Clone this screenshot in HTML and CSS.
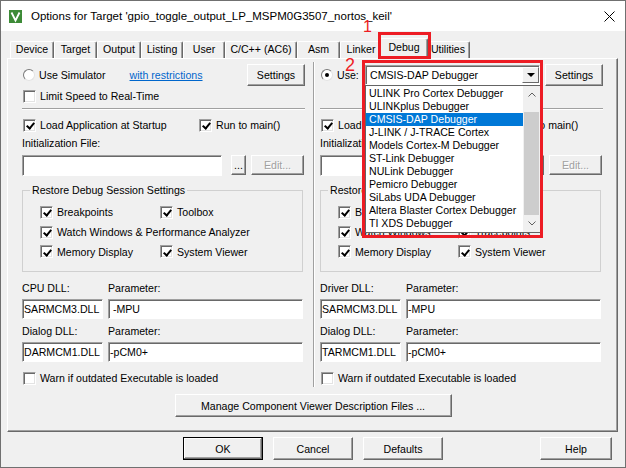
FILE: index.html
```html
<!doctype html>
<html lang="en">
<head>
    <meta charset="utf-8">
    <title>Options for Target</title>
    <link rel="stylesheet" href="styles.css">
</head>
<body>
<div class="window">
    <header class="titlebar">
        <svg class="app-icon" viewBox="0 0 13 13"><rect width="13" height="13" fill="#3d8b37"/><path d="M2.5 2.5 L6.5 10.5 L10.5 2.5" stroke="#fff" stroke-width="1.8" fill="none"/></svg>
        <span class="title">Options for Target 'gpio_toggle_output_LP_MSPM0G3507_nortos_keil'</span>
        <svg class="close" viewBox="0 0 11 11"><path d="M0.5 0.5L10.5 10.5M10.5 0.5L0.5 10.5" stroke="#000" stroke-width="1"/></svg>
    </header>

    <nav class="tabs">
        <span class="tab">Device</span>
        <span class="tab">Target</span>
        <span class="tab">Output</span>
        <span class="tab">Listing</span>
        <span class="tab">User</span>
        <span class="tab">C/C++ (AC6)</span>
        <span class="tab">Asm</span>
        <span class="tab">Linker</span>
        <span class="tab active">Debug</span>
        <span class="tab">Utilities</span>
    </nav>

    <section class="panel">
        <div class="columns">
            <!-- simulator side -->
            <div class="col">
                <div class="row top-row">
                    <label class="opt"><span class="radio"></span>Use Simulator</label>
                    <a href="#" class="sim-link">with restrictions</a>
                    <button class="btn settings">Settings</button>
                </div>
                <div class="row tall">
                    <label class="opt"><span class="cb"></span>Limit Speed to Real-Time</label>
                </div>
                <div class="sep"></div>
                <div class="pair">
                    <label class="opt"><span class="cb on"></span>Load Application at Startup</label>
                    <label class="opt"><span class="cb on"></span>Run to main()</label>
                </div>
                <div class="cap">Initialization File:</div>
                <div class="file-row">
                    <span class="field"></span>
                    <button class="btn browse">...</button>
                    <button class="btn edit" disabled>Edit...</button>
                </div>
                <fieldset class="group">
                    <legend>Restore Debug Session Settings</legend>
                    <div class="checks">
                        <label class="opt"><span class="cb on"></span>Breakpoints</label>
                        <label class="opt"><span class="cb on"></span>Toolbox</label>
                        <label class="opt wide"><span class="cb on"></span>Watch Windows &amp; Performance Analyzer</label>
                        <label class="opt"><span class="cb on"></span>Memory Display</label>
                        <label class="opt"><span class="cb on"></span>System Viewer</label>
                    </div>
                </fieldset>
                <div class="dlls">
                    <span>CPU DLL:</span><span>Parameter:</span>
                    <span class="field">SARMCM3.DLL</span><span class="field"> -MPU</span>
                    <span>Dialog DLL:</span><span>Parameter:</span>
                    <span class="field">DARMCM1.DLL</span><span class="field">-pCM0+</span>
                </div>
                <div class="row warn">
                    <label class="opt"><span class="cb"></span>Warn if outdated Executable is loaded</label>
                </div>
            </div>

            <div class="divider"></div>

            <!-- target driver side -->
            <div class="col">
                <div class="row top-row">
                    <label class="opt"><span class="radio on"></span>Use:</label>
                    <div class="combo">
                        <span>CMSIS-DAP Debugger</span>
                        <span class="combo-arrow"></span>
                        <div class="droplist">
                            <ul class="items">
                                <li>ULINK Pro Cortex Debugger</li>
                                <li>ULINKplus Debugger</li>
                                <li class="sel">CMSIS-DAP Debugger</li>
                                <li>J-LINK / J-TRACE Cortex</li>
                                <li>Models Cortex-M Debugger</li>
                                <li>ST-Link Debugger</li>
                                <li>NULink Debugger</li>
                                <li>Pemicro Debugger</li>
                                <li>SiLabs UDA Debugger</li>
                                <li>Altera Blaster Cortex Debugger</li>
                                <li>TI XDS Debugger</li>
                            </ul>
                            <div class="scrollbar">
                                <span class="sb-btn"><svg viewBox="0 0 8 5"><path d="M0.5 4.5L4 1L7.5 4.5" stroke="#606060" fill="none"/></svg></span>
                                <span class="sb-track"><span class="sb-thumb"></span></span>
                                <span class="sb-btn"><svg viewBox="0 0 8 5"><path d="M0.5 0.5L4 4L7.5 0.5" stroke="#606060" fill="none"/></svg></span>
                            </div>
                        </div>
                    </div>
                    <button class="btn settings">Settings</button>
                </div>
                <div class="row tall"></div>
                <div class="sep"></div>
                <div class="pair">
                    <label class="opt"><span class="cb on"></span>Load Application at Startup</label>
                    <label class="opt"><span class="cb on"></span>Run to main()</label>
                </div>
                <div class="cap">Initialization File:</div>
                <div class="file-row">
                    <span class="field"></span>
                    <button class="btn browse">...</button>
                    <button class="btn edit" disabled>Edit...</button>
                </div>
                <fieldset class="group">
                    <legend>Restore Debug Session Settings</legend>
                    <div class="checks">
                        <label class="opt"><span class="cb on"></span>Breakpoints</label>
                        <label class="opt"><span class="cb on"></span>Toolbox</label>
                        <label class="opt"><span class="cb on"></span>Watch Windows</label>
                        <label class="opt"><span class="cb on"></span>Tracepoints</label>
                        <label class="opt"><span class="cb on"></span>Memory Display</label>
                        <label class="opt"><span class="cb on"></span>System Viewer</label>
                    </div>
                </fieldset>
                <div class="dlls">
                    <span>Driver DLL:</span><span>Parameter:</span>
                    <span class="field">SARMCM3.DLL</span><span class="field">-MPU</span>
                    <span>Dialog DLL:</span><span>Parameter:</span>
                    <span class="field">TARMCM1.DLL</span><span class="field">-pCM0+</span>
                </div>
                <div class="row warn">
                    <label class="opt"><span class="cb"></span>Warn if outdated Executable is loaded</label>
                </div>
            </div>
        </div>
        <div class="manage-row">
            <button class="btn manage">Manage Component Viewer Description Files ...</button>
        </div>
    </section>

    <footer class="buttons">
        <button class="btn default">OK</button>
        <button class="btn">Cancel</button>
        <button class="btn">Defaults</button>
        <button class="btn help">Help</button>
    </footer>

    <!-- screenshot annotations -->
    <span class="mark mark-1">1</span>
    <div class="redbox box-tab"></div>
    <span class="mark mark-2">2</span>
    <div class="redbox box-drop"></div>
</div>
</body>
</html>
```

FILE: styles.css
```css
* { box-sizing: border-box; }
html, body { margin: 0; padding: 0; }
body {
    width: 626px;
    height: 468px;
    overflow: hidden;
    font-family: "Liberation Sans", Arial, sans-serif;
    font-size: 10.6px;
    color: #000;
    background: #fff;
}
.window {
    position: relative;
    width: 626px;
    height: 468px;
    background: #f0f0f0;
    border: 1px solid #707070;
}

/* title bar */
.titlebar {
    display: flex;
    align-items: center;
    height: 30px;
    padding-left: 8px;
    background: #fff;
}
.app-icon { width: 13px; height: 13px; margin-right: 9px; }
.title { flex: 1; font-size: 11.5px; }
.close { width: 11px; height: 11px; margin-right: 10px; }

/* tabs */
.tabs {
    display: flex;
    align-items: flex-end;
    height: 20px;
    margin: 7px 0 0 9px;
}
.tab {
    width: 42px;
    height: 17px;
    line-height: 15px;
    text-align: center;
    white-space: nowrap;
    border: 1px solid;
    border-bottom: 0;
    border-color: #fff #696969 transparent #fff;
    box-shadow: inset -1px 0 #a0a0a0;
    border-radius: 2px 2px 0 0;
}
.tab:nth-child(1),
.tab:nth-child(3),
.tab:nth-child(9),
.tab:nth-child(10) { width: 44px; }
.tab:nth-child(2),
.tab:nth-child(7) { width: 43px; }
.tab:nth-child(6) { width: 72px; }
.tab.active {
    position: relative;
    z-index: 1;
    width: 48px;
    height: 21px;
    margin: 0 -2px -1px;
    line-height: 16px;
    background: #f0f0f0;
}

/* tab page */
.panel {
    height: 374px;
    margin: 0 7px 0 6px;
    padding: 5px 13px 0 14px;
    border: 1px solid;
    border-color: #fff #696969 #696969 #fff;
    box-shadow: inset -1px -1px #a0a0a0;
}
.columns { display: flex; }
.col { width: 283px; display: flex; flex-direction: column; }
.divider {
    width: 2px;
    margin: -2px 5px 0 8px;
    border-left: 1px solid #a0a0a0;
    border-right: 1px solid #fff;
}

.row { display: flex; align-items: center; }
.top-row { height: 22px; }
.tall { height: 20px; }
.warn { height: 18px; margin-top: 7px; }
.opt { display: flex; align-items: center; gap: 4px; white-space: nowrap; }

.cb {
    position: relative;
    flex: none;
    width: 13px;
    height: 13px;
    margin-left: 1px;
    background: #fff;
    border: 1px solid;
    border-color: #a0a0a0 #fff #fff #a0a0a0;
    box-shadow: inset 1px 1px #696969, inset -1px -1px #e3e3e3;
}
.cb.on::after {
    content: "";
    position: absolute;
    left: 4px;
    top: 1.5px;
    width: 3px;
    height: 6px;
    border: solid #000;
    border-width: 0 2px 2px 0;
    transform: rotate(40deg);
}
.radio {
    position: relative;
    flex: none;
    width: 12px;
    height: 12px;
    margin-left: 1px;
    border-radius: 50%;
    background: #fff;
    border: 1px solid;
    border-color: #7a7a7a #e3e3e3 #e3e3e3 #7a7a7a;
}
.radio.on::after {
    content: "";
    position: absolute;
    left: 3px;
    top: 3px;
    width: 4px;
    height: 4px;
    border-radius: 50%;
    background: #000;
}
.sim-link { margin-left: 24px; color: #0066cc; }

.btn {
    font: inherit;
    color: #000;
    padding: 0;
    background: #f0f0f0;
    border: 1px solid;
    border-color: #fff #696969 #696969 #fff;
    box-shadow: inset -1px -1px #a0a0a0;
}
.btn.default {
    border-color: #000;
    box-shadow: inset -1px -1px #696969, inset 1px 1px #fff, inset -2px -2px #a0a0a0;
}
.btn:disabled { color: #a0a0a0; text-shadow: 1px 1px #fff; }
.settings { width: 58px; height: 22px; margin-left: auto; }

.sep {
    height: 2px;
    margin: 2px 0 6px;
    border-top: 1px solid #a0a0a0;
    border-bottom: 1px solid #fff;
}
.pair {
    display: grid;
    grid-template-columns: 176px auto;
    align-items: center;
    height: 18px;
}
.cap { height: 16px; line-height: 16px; margin-top: 1px; }

.field {
    height: 20px;
    padding: 0 1px;
    line-height: 18px;
    white-space: pre;
    overflow: hidden;
    background: #fff;
    border: 1px solid;
    border-color: #a0a0a0 #fff #fff #a0a0a0;
    box-shadow: inset 1px 1px #696969;
}
.file-row { display: flex; height: 21px; margin-top: 4px; }
.file-row .field { flex: 1; height: 21px; }
.browse { width: 15px; height: 20px; margin-left: 9px; }
.edit { width: 53px; height: 20px; margin: 0 1px 0 5px; }

.group {
    min-width: 0;
    margin: 7px 2px 0 0;
    padding: 0 0 10px;
    border: 1px solid #d0d0d0;
}
.group legend { margin-left: 7px; padding: 0 2px; line-height: 14px; }
.checks {
    display: grid;
    grid-template-columns: 120px auto;
    grid-template-rows: 20px 20px 19px;
    align-items: center;
    padding: 5px 0 0 16px;
}
.wide { grid-column: 1 / 3; }

.dlls {
    display: grid;
    grid-template-columns: 81px 195px;
    grid-template-rows: 16px 20px 17px 20px;
    column-gap: 5px;
    row-gap: 3px;
    align-items: center;
    margin-top: 8px;
}

/* debugger combo and its open list */
.combo {
    position: relative;
    display: flex;
    align-items: center;
    width: 175px;
    height: 20px;
    margin-left: auto;
    padding-left: 4px;
    background: #fff;
    border: 1px solid;
    border-color: #a0a0a0 #fff #fff #a0a0a0;
    box-shadow: inset 1px 1px #696969;
}
.combo + .settings { margin-left: 5px; }
.combo-arrow {
    display: flex;
    align-items: center;
    justify-content: center;
    width: 17px;
    height: 16px;
    margin: 0 0 0 auto;
    background: #f0f0f0;
    border: 1px solid;
    border-color: #fff #696969 #696969 #fff;
}
.combo-arrow::after {
    content: "";
    border-left: 4px solid transparent;
    border-right: 4px solid transparent;
    border-top: 4px solid #000;
}
.droplist {
    position: absolute;
    z-index: 5;
    left: -1px;
    top: 19px;
    display: flex;
    width: 176px;
    height: 148px;
    background: #fff;
    border: 1px solid #646464;
}
.items { flex: 1; margin: 0; padding: 1px 0 0; list-style: none; }
.items li { height: 13px; line-height: 13px; padding-left: 3px; white-space: nowrap; }
.items li.sel { background: #0078d7; color: #fff; }
.scrollbar { display: flex; flex-direction: column; width: 17px; background: #f0f0f0; }
.sb-btn { display: flex; align-items: center; justify-content: center; height: 17px; }
.sb-btn svg { width: 8px; height: 5px; }
.sb-track { flex: 1; padding: 9px 0 0; }
.sb-thumb { display: block; height: 103px; margin: 0 1px; background: #cdcdcd; }

/* bottom */
.manage-row { display: flex; justify-content: center; margin-top: 7px; }
.manage { width: 277px; height: 23px; }
.buttons {
    display: flex;
    gap: 10px;
    margin-top: 5px;
    padding: 0 13px 0 182px;
}
.buttons .btn { width: 80px; height: 23px; }
.buttons .help { width: 72px; margin-left: auto; }

/* red callouts drawn on the screenshot */
.mark { position: absolute; color: #ed1c24; line-height: 1; }
.mark-1 { left: 362px; top: 18px; font-size: 16px; }
.mark-2 { left: 344px; top: 55px; font-size: 18px; }
.redbox { position: absolute; z-index: 10; border: 3px solid #ed1c24; }
.box-tab { left: 377px; top: 31px; width: 53px; height: 27px; }
.box-drop { left: 361px; top: 59px; width: 181px; height: 178px; }
```
